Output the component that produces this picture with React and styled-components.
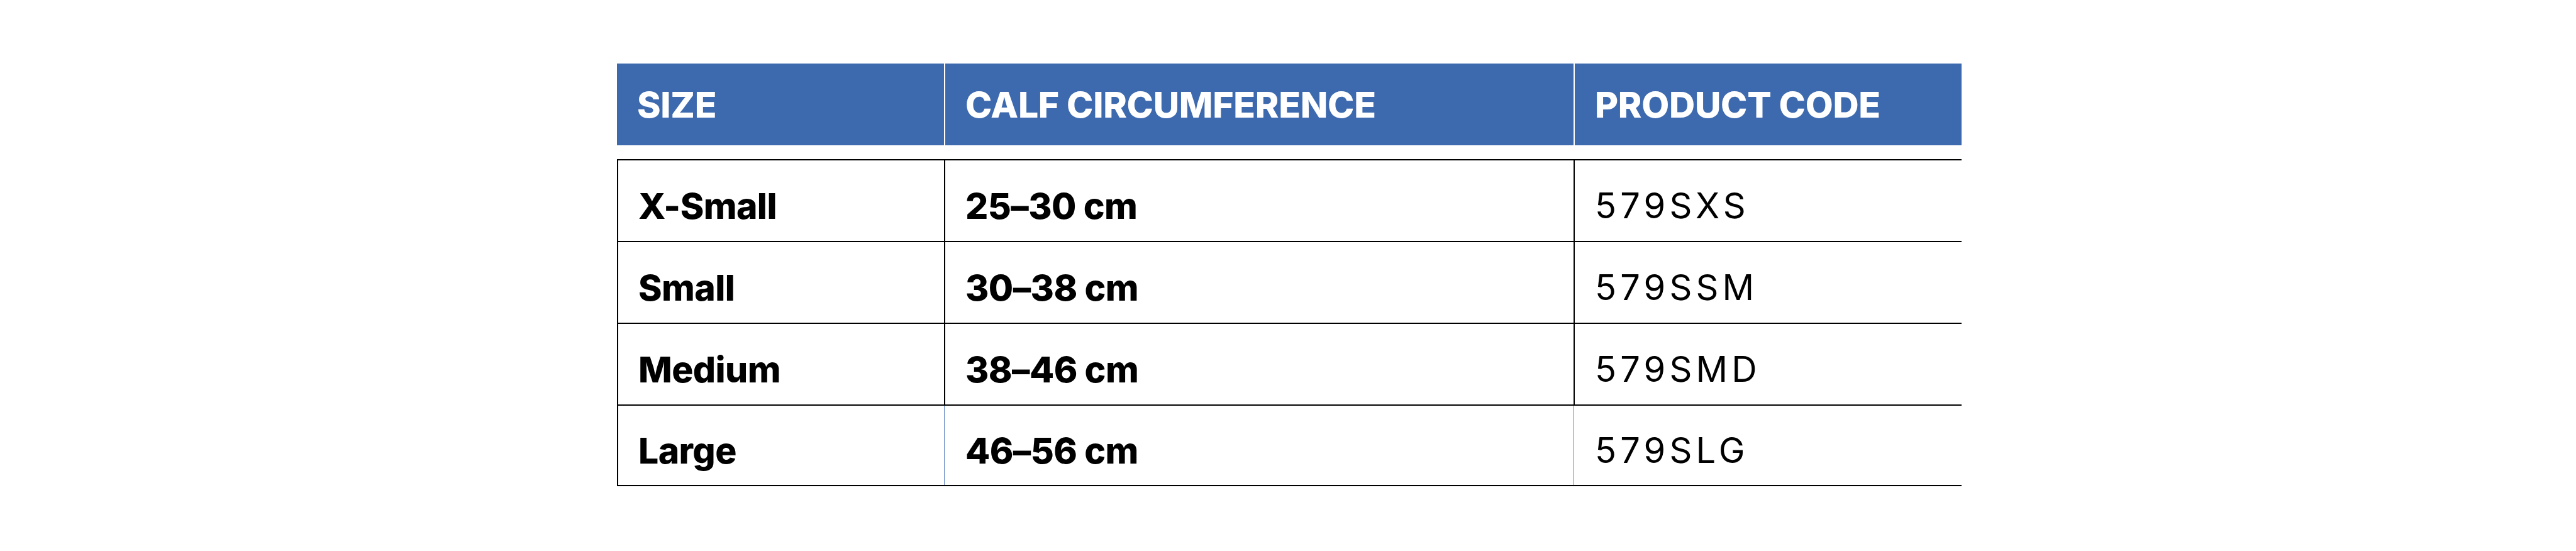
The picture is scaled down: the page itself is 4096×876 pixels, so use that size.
import React from "react";
import styled, { createGlobalStyle } from "styled-components";

const GlobalStyle = createGlobalStyle`
  html, body {
    margin: 0;
    background: #ffffff;
  }
  body {
    font-family: Inter, "Liberation Sans", sans-serif;
    color: #000;
  }
`;

const Page = styled.div`
  padding: 101px 0 0 981px;
`;

const Table = styled.div`
  width: 2138px;
`;

const HeadRow = styled.div`
  display: grid;
  grid-template-columns: 520px 1001px 617px;
  height: 130px;
  margin-bottom: 22px;
  background: #3d69ae;
`;

const HeadCell = styled.div`
  display: flex;
  align-items: center;
  padding-left: 32px;
  border-left: ${(p) => (p.$first ? "none" : "2px solid #ffffff")};
  color: #ffffff;
  font-size: 57px;
  font-weight: 800;
  letter-spacing: -0.3px;
  white-space: nowrap;
`;

const Row = styled.div`
  display: grid;
  grid-template-columns: 520px 1001px 617px;
  height: 130px;
  box-sizing: border-box;
  border-top: 2px solid #000;
  border-bottom: ${(p) => (p.$last ? "2px solid #000" : "none")};
`;

const Cell = styled.div`
  display: flex;
  align-items: center;
  padding: 16px 0 0 ${(p) => (p.$thin ? 33 : 32)}px;
  border-left: ${(p) =>
    p.$thin ? "1px solid #5b80c0" : "2px solid #000"};
  font-size: 57px;
  font-weight: 800;
  letter-spacing: -0.6px;
  white-space: nowrap;
`;

const CodeCell = styled(Cell)`
  font-size: 56px;
  font-weight: 400;
  letter-spacing: 0.11em;
`;

const rows = [
  { size: "X-Small", calf: "25–30 cm", code: "579SXS" },
  { size: "Small", calf: "30–38 cm", code: "579SSM" },
  { size: "Medium", calf: "38–46 cm", code: "579SMD" },
  { size: "Large", calf: "46–56 cm", code: "579SLG" },
];

export default function App() {
  return (
    <>
      <GlobalStyle />
      <Page>
        <Table>
          <HeadRow>
            <HeadCell $first>SIZE</HeadCell>
            <HeadCell>CALF CIRCUMFERENCE</HeadCell>
            <HeadCell>PRODUCT CODE</HeadCell>
          </HeadRow>
          {rows.map((r, i) => {
            const last = i === rows.length - 1;
            return (
              <Row key={r.code} $last={last}>
                <Cell>{r.size}</Cell>
                <Cell $thin={last}>{r.calf}</Cell>
                <CodeCell $thin={last}>{r.code}</CodeCell>
              </Row>
            );
          })}
        </Table>
      </Page>
    </>
  );
}
